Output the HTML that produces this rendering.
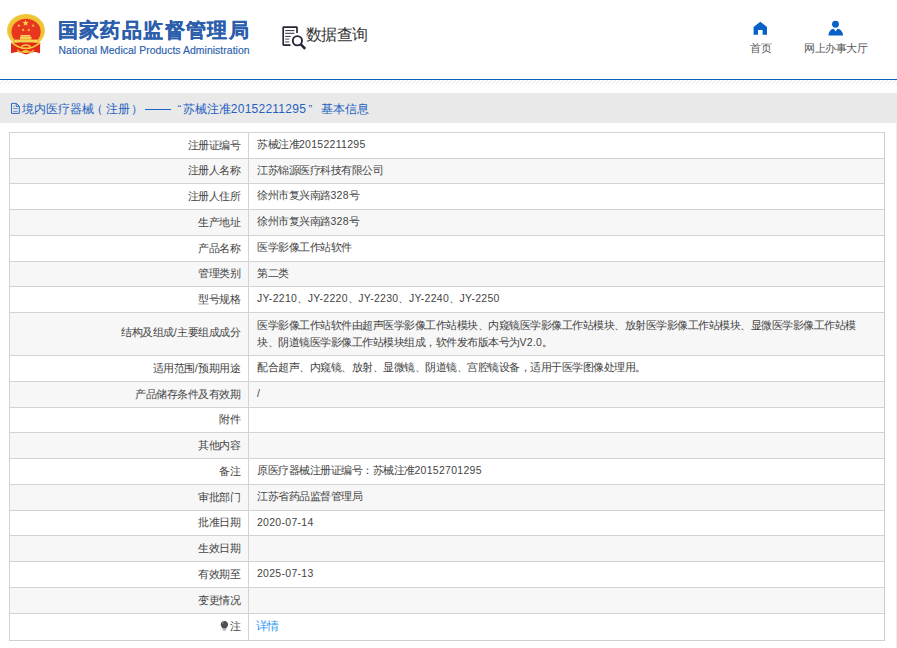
<!DOCTYPE html>
<html><head><meta charset="utf-8">
<style>
*{margin:0;padding:0;box-sizing:border-box}
html,body{width:897px;height:648px;overflow:hidden;background:#fff;font-family:"Liberation Sans",sans-serif;color:#333}
.abs{position:absolute}
#title{left:57.6px;top:16px;font-size:20px;font-weight:bold;color:#2b5eab;letter-spacing:1.4px;-webkit-text-stroke:0.25px #2b5eab;white-space:nowrap;line-height:28px}
#en{left:58.5px;top:44px;font-size:10.45px;color:#2b5eab;letter-spacing:0.035px;-webkit-text-stroke:0.15px #2b5eab;white-space:nowrap;line-height:13px}
#sj{left:305.5px;top:24px;font-size:15.7px;color:#333;letter-spacing:-0.4px;line-height:22px;white-space:nowrap}
.nav{font-size:10.5px;color:#555;line-height:14px;white-space:nowrap;letter-spacing:-0.5px}
#bline{left:0;top:79px;width:897px;height:1px;background:#0a60bf}
#hatch{left:0;top:80px;width:897px;height:4px;background:repeating-linear-gradient(135deg,#fff 0,#fff 2px,#e2e2e2 2px,#e2e2e2 3px)}
#crumb{left:0;top:93px;width:897px;height:30px;background:#e9e9e9}
.ct{top:101px;font-size:12px;color:#1f62c0;line-height:16px;white-space:nowrap}
.row{position:absolute;left:9px;width:875px;border:1px solid #d3d3d3;border-bottom:none;border-right:none;font-size:11.2px;color:#444;letter-spacing:-0.5px}
.en{letter-spacing:0.3px;font-size:10.47px}
.lab{position:absolute;left:0;top:0;bottom:0;width:239px;border-right:1px solid #d3d3d3;text-align:right;padding-right:8px;padding-bottom:1px;display:flex;align-items:center;justify-content:flex-end;white-space:nowrap}
.val{position:absolute;left:239px;top:0;bottom:0;right:0;padding-left:8px;padding-bottom:1px;display:flex;align-items:center;line-height:17.3px;white-space:nowrap}
#tblbot{left:9px;top:640px;width:876px;height:1px;background:#cfcfcf}
#rline{left:896px;top:123px;width:1px;height:525px;background:#ececec}
.bulb{display:inline-block;width:8px;height:10px;margin-right:1px}
.lnk{color:#3196f8;font-size:11.8px;letter-spacing:-1.3px;position:relative;left:-0.6px}
</style></head><body>
<svg class="abs" style="left:0;top:0" width="50" height="60" viewBox="0 0 50 60">
 <ellipse cx="26" cy="30.4" rx="18.9" ry="16.4" fill="#f1c232"/>
 <ellipse cx="26" cy="30.4" rx="18.4" ry="15.9" fill="none" stroke="#f8da78" stroke-width="1" stroke-dasharray="1.3 1.1"/>
 <ellipse cx="26.1" cy="31.8" rx="14.6" ry="13" fill="#e9361f"/>
 <path d="M11 42.8 L40.2 42.8 L40 53.2 L34.5 51.8 L26 54.4 L17.5 51.8 L11 53.2Z" fill="#e22a1c"/>
 <polygon points="25.60,19.70 26.41,21.88 28.74,21.98 26.92,23.43 27.54,25.67 25.60,24.39 23.66,25.67 24.28,23.43 22.46,21.98 24.79,21.88" fill="#f9d64a"/>
 <polygon points="19.24,23.96 19.35,25.15 20.50,25.51 19.40,25.99 19.41,27.19 18.62,26.29 17.48,26.67 18.09,25.64 17.37,24.67 18.54,24.93" fill="#f9d64a"/><polygon points="32.66,23.96 33.36,24.93 34.53,24.67 33.81,25.64 34.42,26.67 33.28,26.29 32.49,27.19 32.50,25.99 31.40,25.51 32.55,25.15" fill="#f9d64a"/>
 <polygon points="23.95,28.43 23.75,29.61 24.76,30.25 23.58,30.43 23.28,31.59 22.74,30.52 21.55,30.59 22.40,29.75 21.96,28.64 23.03,29.19" fill="#f9d64a"/><polygon points="28.05,28.43 28.97,29.19 30.04,28.64 29.60,29.75 30.45,30.59 29.26,30.52 28.72,31.59 28.42,30.43 27.24,30.25 28.25,29.61" fill="#f9d64a"/>
 <rect x="20.6" y="35.1" width="9.6" height="1.5" fill="#fadf70"/>
 <rect x="20" y="36.6" width="11.4" height="3" fill="#f6d04c"/>
 <rect x="14.9" y="39.6" width="22.5" height="2.8" fill="#f7d652"/>
 <path d="M11.8 42.6 Q26 54.2 40.2 42.6" fill="none" stroke="#f3c93a" stroke-width="1.7"/>
 <path d="M21.5 47.2 Q22.5 44.6 25 45.4 Q26 44 27.2 45.4 Q29.6 44.6 30.5 47.2" fill="none" stroke="#f5cd40" stroke-width="1.3"/>
 <ellipse cx="25.6" cy="51.4" rx="3.2" ry="1.5" fill="#f4ca3c"/>
 <path d="M17.4 49.8 Q19.5 53.5 22.4 51.6 M33.6 49.8 Q31.5 53.5 28.8 51.6" fill="none" stroke="#f4ca3c" stroke-width="1.3"/>
</svg>
<div id="title" class="abs">国家药品监督管理局</div>
<div id="en" class="abs">National Medical Products Administration</div>
<svg class="abs" style="left:270px;top:20px" width="40" height="35" viewBox="270 20 40 35">
 <path d="M297 33.1 V27.8 Q297 27.2 296.4 27.2 H283.8 Q283.2 27.2 283.2 27.8 V44.5 Q283.2 45.1 283.8 45.1 H290.5" fill="none" stroke="#262637" stroke-width="1.7"/>
 <path d="M285.2 30.6H294.4M285.2 33.3H294.4M285.2 36.4H290.7" stroke="#2e2e3e" stroke-width="1"/>
 <path d="M285.2 39.1H289.3M285.2 41.9H289.3" stroke="#6a6a78" stroke-width="1.1"/>
 <circle cx="297.4" cy="40.75" r="4.6" fill="none" stroke="#262637" stroke-width="1.9"/>
 <path d="M300.9 44.3 L305.2 48.8" stroke="#262637" stroke-width="2.6"/>
</svg>
<div id="sj" class="abs">数据查询</div>
<svg class="abs" style="left:740px;top:15px" width="40" height="25" viewBox="740 15 40 25">
 <path d="M760.3 21.7 L767 26.9 V34.8 H762.6 V30.1 H758 V34.8 H753.6 V26.9Z" fill="#0862c6"/>
</svg>
<div class="abs nav" style="left:750px;top:41px">首页</div>
<svg class="abs" style="left:820px;top:15px" width="30" height="25" viewBox="820 15 30 25">
 <circle cx="835.5" cy="24.3" r="3.45" fill="#0862c6"/>
 <path d="M828.4 35.5 Q829 29.2 833.8 28.7 L835.6 31.6 L837.4 28.7 Q842.4 29.2 843.1 35.5Z" fill="#0862c6"/>
</svg>
<div class="abs nav" style="left:804px;top:41px">网上办事大厅</div>
<div id="bline" class="abs"></div>
<svg class="abs" style="left:0;top:80px" width="897" height="4"><defs><pattern id="hp" patternUnits="userSpaceOnUse" width="4" height="4"><path d="M-1 5 L5 -1" stroke="#e3e3e3" stroke-width="1"/></pattern></defs><rect width="897" height="4" fill="url(#hp)"/></svg>
<div id="crumb" class="abs"></div>
<svg class="abs" style="left:8px;top:100px" width="15" height="17" viewBox="8 100 15 17">
 <path d="M11.5 103.4 H16.4 L19.35 106.3 V113.4 H11.5Z" fill="none" stroke="#1f62c0" stroke-width="0.95" stroke-linejoin="round"/>
 <path d="M16.2 103.6 V106.4 H19.2" fill="none" stroke="#1f62c0" stroke-width="0.9"/>
 <path d="M13.2 106.3H14.6M13.2 108.5H17.7M13.2 111.3H17.7" stroke="#5a7fcc" stroke-width="0.9"/>
</svg>
<div class="abs ct" style="left:21.7px">境内医疗器械<span style="position:relative;left:-3px">（</span>注册<span style="position:relative;left:1.5px">）</span></div>
<div class="abs" style="left:145px;top:109px;width:26px;height:1px;background:#1f62c0"></div>
<div class="abs ct" style="left:177.5px;font-size:11px">“</div>
<div class="abs ct" style="left:182.8px">苏械注准<span style="letter-spacing:0.25px">20152211295</span></div>
<div class="abs ct" style="left:308.5px;font-size:11px">”</div>
<div class="abs ct" style="left:320.6px">基本信息</div>
<div class="row" style="top:132px;height:26px;background:#fff"><div class="lab"><div>注册证编号</div></div><div class="val"><div>苏械注准<span class="en">20152211295</span></div></div></div>
<div class="row" style="top:158px;height:25px;background:#f7f7f7"><div class="lab"><div>注册人名称</div></div><div class="val"><div>江苏锦源医疗科技有限公司</div></div></div>
<div class="row" style="top:183px;height:26px;background:#fff"><div class="lab"><div>注册人住所</div></div><div class="val"><div>徐州市复兴南路<span class="en">328</span>号</div></div></div>
<div class="row" style="top:209px;height:26px;background:#f7f7f7"><div class="lab"><div>生产地址</div></div><div class="val"><div>徐州市复兴南路<span class="en">328</span>号</div></div></div>
<div class="row" style="top:235px;height:26px;background:#fff"><div class="lab"><div>产品名称</div></div><div class="val"><div>医学影像工作站软件</div></div></div>
<div class="row" style="top:261px;height:25px;background:#f7f7f7"><div class="lab"><div>管理类别</div></div><div class="val"><div>第二类</div></div></div>
<div class="row" style="top:286px;height:26px;background:#fff"><div class="lab"><div>型号规格</div></div><div class="val"><div><span class="en">JY-2210</span>、<span class="en">JY-2220</span>、<span class="en">JY-2230</span>、<span class="en">JY-2240</span>、<span class="en">JY-2250</span></div></div></div>
<div class="row" style="top:312px;height:43px;background:#f7f7f7"><div class="lab" style="padding-bottom:3px"><div>结构及组成<span class="en">/</span>主要组成成分</div></div><div class="val" style="padding-bottom:0"><div>医学影像工作站软件由超声医学影像工作站模块、内窥镜医学影像工作站模块、放射医学影像工作站模块、显微医学影像工作站模<br>块、阴道镜医学影像工作站模块组成，软件发布版本号为<span class="en">V2.0</span>。</div></div></div>
<div class="row" style="top:355px;height:26px;background:#fff"><div class="lab"><div>适用范围<span class="en">/</span>预期用途</div></div><div class="val"><div>配合超声、内窥镜、放射、显微镜、阴道镜、宫腔镜设备，适用于医学图像处理用。</div></div></div>
<div class="row" style="top:381px;height:26px;background:#f7f7f7"><div class="lab"><div>产品储存条件及有效期</div></div><div class="val"><div><span class="en">/</span></div></div></div>
<div class="row" style="top:407px;height:25px;background:#fff"><div class="lab"><div>附件</div></div><div class="val"><div></div></div></div>
<div class="row" style="top:432px;height:26px;background:#f7f7f7"><div class="lab"><div>其他内容</div></div><div class="val"><div></div></div></div>
<div class="row" style="top:458px;height:26px;background:#fff"><div class="lab"><div>备注</div></div><div class="val"><div>原医疗器械注册证编号：苏械注准<span class="en">20152701295</span></div></div></div>
<div class="row" style="top:484px;height:26px;background:#f7f7f7"><div class="lab"><div>审批部门</div></div><div class="val"><div>江苏省药品监督管理局</div></div></div>
<div class="row" style="top:510px;height:25px;background:#fff"><div class="lab"><div>批准日期</div></div><div class="val"><div><span class="en">2020-07-14</span></div></div></div>
<div class="row" style="top:535px;height:26px;background:#f7f7f7"><div class="lab"><div>生效日期</div></div><div class="val"><div></div></div></div>
<div class="row" style="top:561px;height:26px;background:#fff"><div class="lab"><div>有效期至</div></div><div class="val"><div><span class="en">2025-07-13</span></div></div></div>
<div class="row" style="top:587px;height:26px;background:#f7f7f7"><div class="lab"><div>变更情况</div></div><div class="val"><div></div></div></div>
<div class="row" style="top:613px;height:27px;background:#fff"><div class="lab"><div><svg class="abs" style="left:209px;top:5px" width="11" height="13" viewBox="219 619 11 13"><path d="M224.4 620.9 C226.6 620.9 228.1 622.6 228.1 624.6 C228.1 626.3 227 627.2 226.2 628.6 L222.6 628.6 C221.8 627.2 220.7 626.3 220.7 624.6 C220.7 622.6 222.2 620.9 224.4 620.9Z" fill="#4e4e55"/><path d="M222.2 623.9 Q222.5 622.3 224 622" stroke="#9aa3b5" stroke-width="0.7" fill="none"/><rect x="222.7" y="628.9" width="3.4" height="1.8" rx="0.6" fill="#b4b4bc"/></svg>注</div></div><div class="val"><div><span class="lnk">详情</span></div></div></div>
<div id="tblbot" class="abs"></div>
<div class="abs" style="left:884px;top:132px;width:1px;height:509px;background:#cbcbcb"></div>
<div class="abs" style="left:0;top:122px;width:896px;height:1px;background:#e6e9ef"></div>
<div id="rline" class="abs"></div>
</body></html>
